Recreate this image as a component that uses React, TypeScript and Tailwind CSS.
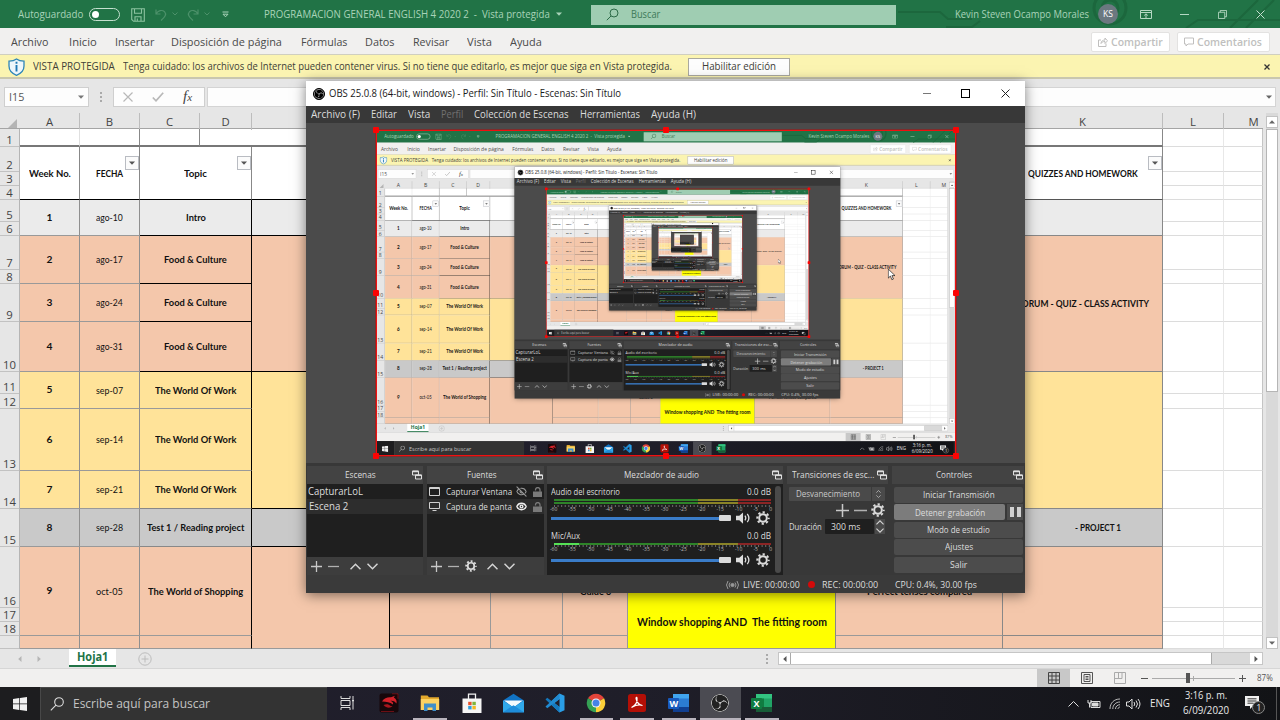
import React, { useLayoutEffect, useRef, useState } from 'react';
import { SiObsstudio } from 'react-icons/si';
import { Eye, EyeOff } from 'lucide-react';

type Kids = { children?: React.ReactNode };

/** One line of text, condensed or widened to fill the width set by its class. */
function T({ className = '', children }: { className?: string } & Kids) {
  const box = useRef<HTMLSpanElement>(null);
  const ink = useRef<HTMLSpanElement>(null);
  const [s, setS] = useState(1);
  useLayoutEffect(() => {
    if (box.current && ink.current && ink.current.offsetWidth > 0) {
      setS(box.current.offsetWidth / ink.current.offsetWidth);
    }
  }, []);
  return (
    <span ref={box} className={`block shrink-0 whitespace-pre leading-none ${className}`}>
      <span ref={ink} className="inline-block origin-left whitespace-pre" style={{ transform: `scaleX(${s})` }}>
        {children}
      </span>
    </span>
  );
}

function Caret({ className = '' }: { className?: string }) {
  return (
    <svg viewBox="0 0 6 4" className={`h-[4px] w-[6px] shrink-0 ${className}`} fill="currentColor">
      <path d="M0 .5h6L3 3.8z" />
    </svg>
  );
}

function ExcelTitle() {
  return (
    <div className="flex h-[28px] shrink-0 items-center bg-[#217346] text-[10.8px] text-[#a9d3b9]">
      <T className="ml-[18px] w-[65px]">Autoguardado</T>
      <div className="ml-[6px] flex h-[13px] w-[31px] shrink-0 items-center rounded-full border border-[#c5e0cf] pl-[2px]">
        <div className="h-[7px] w-[7px] rounded-full bg-white" />
      </div>
      <svg viewBox="0 0 14 14" className="ml-[11px] mt-[2px] h-[14px] w-[14px] shrink-0" fill="none" stroke="#8cc3a0" strokeWidth="1.1">
        <path d="M.7 .7h12.6v12.6H2.6L.7 11.4zM3.5 .7v4.6h7V.7M4 13.3V8.8h6v4.5M6.3 10.5v2.5" />
      </svg>
      <svg viewBox="0 0 12 12" className="ml-[10px] h-[13px] w-[12px] shrink-0" fill="none" stroke="#4c916a" strokeWidth="1.2">
        <path d="M1 1v4.5h4.5M1.2 5.2C3 2 7 1 9.500 3.200C12 6 10 8.500 6 12" />
      </svg>
      <svg viewBox="0 0 6 4" className="ml-[5px] h-[4px] w-[6px] shrink-0" fill="none" stroke="#4c916a"><path d="M.5.5 3 3 5.500.5" /></svg>
      <svg viewBox="0 0 12 12" className="ml-[9px] h-[13px] w-[12px] shrink-0 -scale-x-100" fill="none" stroke="#4c916a" strokeWidth="1.2">
        <path d="M1 1v4.5h4.5M1.2 5.2C3 2 7 1 9.500 3.200C12 6 10 8.500 6 12" />
      </svg>
      <svg viewBox="0 0 6 4" className="ml-[5px] h-[4px] w-[6px] shrink-0" fill="none" stroke="#4c916a"><path d="M.5.5 3 3 5.500.5" /></svg>
      <svg viewBox="0 0 7 7" className="ml-[12px] h-[7px] w-[7px] shrink-0" fill="none" stroke="#a9d3b9"><path d="M.5 1h6M1 3.200h5L3.500 5.800z" /></svg>
      <T className="ml-[35px] w-[286px]">PROGRAMACION GENERAL ENGLISH 4 2020 2  -  Vista protegida</T>
      <Caret className="ml-[6px]" />
      <div className="ml-[29px] mt-px flex h-[20px] w-[305px] shrink-0 items-center bg-[#9fcdb2] text-[#3d7a58]">
        <svg viewBox="0 0 13 13" className="ml-[15px] h-[13px] w-[13px]" fill="none" stroke="#2d6b48" strokeWidth="1">
          <circle cx="8" cy="5" r="4" /><path d="M5 8 .8 12.200" />
        </svg>
        <T className="ml-[12px] w-[29px] text-[10.500px]">Buscar</T>
      </div>
      <div className="relative flex h-full flex-1 items-center overflow-hidden">
        <svg viewBox="0 0 384 28" className="absolute inset-0 h-[28px] w-[384px]" fill="none" stroke="#1c673d" strokeWidth="3">
          <path d="M2 12h42l8 7h24M50 27h26l8-6M290 28l12-8h82M334 28 362 0M350 28l28-28" strokeWidth="2" />
          <circle cx="214" cy="8" r="16" /><circle cx="214" cy="8" r="8" />
        </svg>
        <T className="relative ml-[59px] w-[134px]">Kevin Steven Ocampo Morales</T>
        <div className="relative ml-[9px] flex h-[20px] w-[20px] shrink-0 items-center justify-center rounded-full bg-[#6b7880] text-[8.500px] text-white">KS</div>
        <svg viewBox="0 0 12 9" className="relative ml-[22px] h-[9px] w-[12px] shrink-0" fill="none" stroke="#b5d8c3"><path d="M.5.5h11v8H.5zM.5 2.500h11M6 8V4M4.200 5.500 6 3.800l1.800 1.700" /></svg>
        <div className="relative ml-[28px] h-px w-[9px] shrink-0 bg-[#b5d8c3]" />
        <svg viewBox="0 0 10 10" className="relative ml-[29px] h-[9px] w-[9px] shrink-0" fill="none" stroke="#b5d8c3"><path d="M.5 2.500h7v7h-7zM2.500 2.500v-2h7v7h-2" /></svg>
        <svg viewBox="0 0 9 9" className="relative ml-[29px] h-[9px] w-[9px] shrink-0" fill="none" stroke="#c5e0cf"><path d="M.5.5l8 8M8.500.5l-8 8" /></svg>
      </div>
    </div>
  );
}

function ExcelTabs() {
  return (
    <div className="flex h-[26px] shrink-0 items-center bg-[#f1f0ef] pt-px text-[11.600px] text-[#4a4a4a]">
      <T className="ml-[11px] w-[37px]">Archivo</T>
      <T className="ml-[21px] w-[28px]">Inicio</T>
      <T className="ml-[18px] w-[39px]">Insertar</T>
      <T className="ml-[17px] w-[111px]">Disposición de página</T>
      <T className="ml-[19px] w-[46px]">Fórmulas</T>
      <T className="ml-[18px] w-[30px]">Datos</T>
      <T className="ml-[18px] w-[36px]">Revisar</T>
      <T className="ml-[18px] w-[25px]">Vista</T>
      <T className="ml-[18px] w-[32px]">Ayuda</T>
      <div className="flex flex-1 justify-end gap-[7px] pr-[10px] text-[11.300px] text-[#c0bfbe]">
        <div className="flex h-[20px] w-[79px] items-center rounded-[2px] border border-[#e3e2e1] bg-white pl-[6px]">
          <svg viewBox="0 0 10 10" className="h-[10px] w-[10px]" fill="none" stroke="currentColor"><path d="M3 3H.5v6.500h7.500V6.500M3 6.500C3 4 5 3 7 3V1l2.500 2.800L7 6.500v-2C5 4.500 4 5 3 6.500z" /></svg>
          <T className="ml-[3px] w-[52px] font-semibold">Compartir</T>
        </div>
        <div className="flex h-[20px] w-[93px] items-center rounded-[2px] border border-[#e3e2e1] bg-white pl-[6px]">
          <svg viewBox="0 0 10 10" className="h-[10px] w-[10px]" fill="none" stroke="currentColor"><path d="M.5 1h9v6H4L2 9V7H.5z" /></svg>
          <T className="ml-[3px] w-[65px] font-semibold">Comentarios</T>
        </div>
      </div>
    </div>
  );
}

function ProtectedBar() {
  return (
    <div className="flex h-[25px] shrink-0 items-center border-b-2 border-t border-b-[#c9c7ae] border-t-[#d0cfc0] bg-[#fbf4b1] pt-px text-[10.900px] text-[#404038]">
      <svg viewBox="0 0 17 18" className="ml-[8px] h-[18px] w-[17px] shrink-0">
        <path d="M8.500 1C6 3 3.500 3.200 1 3.200V8c0 4.500 3 7.500 7.500 9.300C13 15.500 16 12.500 16 8V3.200c-2.500 0-5-.2-7.500-2.200z" fill="#eef6fb" stroke="#2f86b8" strokeWidth="1.300" />
        <path d="M8.500 7v6.500M8.500 3.800v2" stroke="#1f78b4" strokeWidth="1.900" />
      </svg>
      <T className="ml-[8px] w-[82px]">VISTA PROTEGIDA</T>
      <T className="ml-[8px] w-[549px]">Tenga cuidado: los archivos de Internet pueden contener virus. Si no tiene que editarlo, es mejor que siga en Vista protegida.</T>
      <div className="ml-[16px] flex h-[18px] w-[102px] shrink-0 items-center justify-center border border-[#aaa9a0] bg-[#fdfdfd]">
        <T className="w-[74px]">Habilitar edición</T>
      </div>
      <svg viewBox="0 0 6 6" className="ml-auto mr-[10px] h-[6px] w-[6px] shrink-0" stroke="#333" strokeWidth="1.300"><path d="M.5.5l5 5M5.500.5l-5 5" /></svg>
    </div>
  );
}

function FormulaBar() {
  return (
    <div className="flex h-[34px] shrink-0 items-center bg-[#e6e6e6] pt-px text-[11.500px] text-[#555]">
      <div className="ml-[4px] flex h-[20px] w-[85px] shrink-0 items-center border border-[#cfcfcf] bg-[#fdfdfd]">
        <T className="ml-[4px] w-[15px]">I15</T>
        <Caret className="ml-auto mr-[4px] text-[#777]" />
      </div>
      <div className="ml-[11px] flex w-[2px] shrink-0 flex-col gap-[2px]">
        <i className="h-[2px] bg-[#aaa]" /><i className="h-[2px] bg-[#aaa]" /><i className="h-[2px] bg-[#aaa]" />
      </div>
      <div className="ml-[11px] flex h-[20px] w-[92px] shrink-0 items-center border border-[#cfcfcf] bg-[#fdfdfd]">
        <svg viewBox="0 0 10 10" className="ml-[9px] h-[10px] w-[10px]" stroke="#b8b8b8" strokeWidth="1.200"><path d="M.5.5l9 9M9.500.5l-9 9" /></svg>
        <svg viewBox="0 0 12 10" className="ml-[19px] h-[10px] w-[12px]" fill="none" stroke="#b8b8b8" strokeWidth="1.700"><path d="M.8 5.500 4 8.800 11.200.8" /></svg>
        <span className="ml-[19px] font-['Liberation_Serif',serif] text-[15px] italic leading-none text-[#444]">f<span className="text-[11px]">x</span></span>
      </div>
      <div className="ml-[2px] flex h-[20px] w-[1069px] shrink-0 items-center justify-end border border-[#d4d4d4] bg-[#fdfdfd] pr-[3px] text-[#666]">
        <Caret />
      </div>
    </div>
  );
}

const COLS = 'grid-cols-[20px_60px_60px_60px_52px_138px_101px_72px_65px_208px_167px_160px_61px_39px]';

const ROWNUMS = [
  'h-[18px]', 'h-[25px]', 'h-[14px]', 'h-[14px]', 'h-[22px]', 'h-[14px]', 'h-[34px]', 'h-[14px]', 'h-[38px]',
  'h-[50px]', 'h-[22px]', 'h-[15px]', 'h-[62px]', 'h-[38px]', 'h-[38px]', 'h-[61px]', 'h-[14px]', 'h-[14px]', 'h-[13px]',
];

type Week = { n: string; date: string; topic: string; rows: string; fill: string; w: string; line: string };
const PEACH = 'bg-[#f4c7ab]';
const YELLOW = 'bg-[#ffe399]';
const WEEKS: Week[] = [
  { n: '1', date: 'ago-10', topic: 'Intro', rows: 'row-start-5 row-end-7', fill: 'bg-[#ebebeb]', w: 'w-[20px]', line: 'border-b-black' },
  { n: '2', date: 'ago-17', topic: 'Food & Culture', rows: 'row-start-7 row-end-9', fill: PEACH, w: 'w-[63px]', line: 'border-b-black' },
  { n: '3', date: 'ago-24', topic: 'Food & Culture', rows: 'row-start-9 row-end-10', fill: PEACH, w: 'w-[63px]', line: 'border-b-black' },
  { n: '4', date: 'ago-31', topic: 'Food & Culture', rows: 'row-start-10 row-end-11', fill: PEACH, w: 'w-[63px]', line: 'border-b-black' },
  { n: '5', date: 'sep-07', topic: 'The World Of Work', rows: 'row-start-11 row-end-13', fill: YELLOW, w: 'w-[81px]', line: 'border-b-[#9a9a9a]' },
  { n: '6', date: 'sep-14', topic: 'The World Of Work', rows: 'row-start-13 row-end-14', fill: YELLOW, w: 'w-[81px]', line: 'border-b-[#9a9a9a]' },
  { n: '7', date: 'sep-21', topic: 'The World Of Work', rows: 'row-start-14 row-end-15', fill: YELLOW, w: 'w-[81px]', line: 'border-b-[#888]' },
  { n: '8', date: 'sep-28', topic: 'Test 1 / Reading project', rows: 'row-start-15 row-end-16', fill: 'bg-[#c9c9c9]', w: 'w-[97px]', line: 'border-b-[#888]' },
  { n: '9', date: 'oct-05', topic: 'The World of Shopping', rows: 'row-start-16 row-end-19', fill: PEACH, w: 'w-[95px]', line: 'border-b-[#9a9a9a]' },
  { n: '', date: '', topic: '', rows: 'row-start-19 row-end-20', fill: PEACH, w: 'w-[10px]', line: 'border-b-[#9a9a9a]' },
];

const BLOCKS: [string, string, string][] = [
  ['row-start-5 row-end-7', 'bg-[#ebebeb]', 'border-b-black'],
  ['row-start-7 row-end-11', PEACH, 'border-b-black'],
  ['row-start-11 row-end-15', YELLOW, 'border-b-black'],
  ['row-start-15 row-end-16', 'bg-[#c9c9c9]', 'border-b-black'],
  ['row-start-16 row-end-20', PEACH, 'border-b-[#9a9a9a]'],
];

const LOWER = [
  { col: 'col-start-7', label: '', w: 'w-[10px]', line: 'border-r-[#999]' },
  { col: 'col-start-8', label: '', w: 'w-[10px]', line: 'border-r-[#999]' },
  { col: 'col-start-9', label: 'Guide 3', w: 'w-[31px]', line: 'border-r-[#999]' },
  { col: 'col-start-11', label: 'Perfect tenses compared', w: 'w-[105px]', line: 'border-r-[#888]' },
];

const GRIDROWS = [
  'row-start-1', 'row-start-2', 'row-start-3', 'row-start-4', 'row-start-5', 'row-start-6', 'row-start-7', 'row-start-8', 'row-start-9', 'row-start-10',
  'row-start-11', 'row-start-12', 'row-start-13', 'row-start-14', 'row-start-15', 'row-start-16', 'row-start-17', 'row-start-18', 'row-start-19',
];

function Cell({ className = '', children }: { className?: string } & Kids) {
  return <div className={`flex items-center justify-center border-b border-r ${className}`}>{children}</div>;
}

function FilterButton() {
  return (
    <div className="absolute right-0 top-[9px] flex h-[14px] w-[14px] items-center justify-center border border-[#b9bcc2] bg-[#fbfbfb] text-[#555]">
      <Caret />
    </div>
  );
}

function Sheet() {
  const heads = ['A', 'B', 'C', 'D', '', '', '', '', '', '', 'K', 'L'];
  return (
    <div className="flex h-[536px] shrink-0 bg-[#e6e6e6]">
      <div className="w-[1263px] shrink-0">
        <div className={`grid h-[16px] ${COLS} border-b border-[#a5a5a5] text-[11.300px] leading-[17px] text-[#444]`}>
          <div className="flex items-end justify-end pb-[2px] pr-[3px]">
            <svg viewBox="0 0 9 9" className="h-[9px] w-[9px]" fill="#b4b4b4"><path d="M9 0v9H0z" /></svg>
          </div>
          {heads.map((h, i) => (
            <div key={i} className="border-r border-[#bdbdbd] text-center">{h}</div>
          ))}
          <div className="pl-[20px] text-center">M</div>
        </div>
        <div
          className={`grid h-[520px] ${COLS} grid-rows-[18px_25px_14px_14px_22px_14px_34px_14px_38px_50px_22px_15px_62px_38px_38px_61px_14px_14px_13px] bg-white font-['Lato','Carlito',sans-serif] text-[10.200px] text-[#111]`}
        >
          <div className="col-start-1 row-start-1 row-end-20 border-r border-[#b5b5b5] bg-[#e6e6e6] font-['Open_Sans','Noto_Sans',sans-serif] text-[11.300px] text-[#444]">
            {ROWNUMS.map((h, i) => (
              <div key={i} className={`flex items-end justify-center border-b border-[#c2c2c2] leading-[13px] ${h}`}>{i < 18 ? i + 1 : ''}</div>
            ))}
          </div>

          <Cell className="col-start-2 row-start-1 border-b-2 border-b-[#777] border-r-[#e0e0e0]" />
          <Cell className="col-start-3 row-start-1 border-b-2 border-b-[#777] border-r-[#888]" />
          <Cell className="col-start-4 row-start-1 border-b-2 border-b-[#777] border-r-[#888]" />
          <Cell className="col-start-5 col-end-13 row-start-1 border-b-2 border-b-[#777] border-r-[#888]" />

          <Cell className="col-start-2 row-start-2 row-end-5 border-b-black border-r-[#888] font-bold">
            <T className="w-[42px]">Week No.</T>
          </Cell>
          <Cell className="relative col-start-3 row-start-2 row-end-5 border-b-black border-r-[#888] font-bold">
            <T className="w-[27px]">FECHA</T>
            <FilterButton />
          </Cell>
          <Cell className="relative col-start-4 col-end-6 row-start-2 row-end-5 border-b-black border-r-[#888] font-bold">
            <T className="w-[23px]">Topic</T>
            <FilterButton />
          </Cell>
          <Cell className="col-start-6 col-end-12 row-start-2 row-end-5 border-b-black border-r-[#888]" />
          <Cell className="relative col-start-12 row-start-2 row-end-5 border-b-[#555] border-r-[#888] font-bold">
            <T className="w-[110px]">QUIZZES AND HOMEWORK</T>
            <FilterButton />
          </Cell>

          {WEEKS.map((k) => (
            <React.Fragment key={k.rows}>
              <Cell className={`col-start-2 ${k.rows} ${k.fill} border-b-[#999] border-r-[#8f8f8f] font-bold`}>{k.n}</Cell>
              <Cell className={`col-start-3 ${k.rows} ${k.fill} border-b-[#999] border-r-[#8f8f8f]`}>
                {k.date && <T className="w-[27px]">{k.date}</T>}
              </Cell>
              <Cell className={`col-start-4 col-end-6 ${k.rows} ${k.fill} ${k.line} border-r-black font-bold`}>
                {k.topic && <T className={k.w}>{k.topic}</T>}
              </Cell>
            </React.Fragment>
          ))}

          {BLOCKS.map(([rows, fill, line]) => (
            <Cell key={rows} className={`col-start-6 ${rows} ${fill} ${line} border-r-black`} />
          ))}

          {LOWER.map((c) => (
            <React.Fragment key={c.col}>
              <Cell className={`${c.col} row-start-16 row-end-19 ${PEACH} border-b-[#999] ${c.line} font-bold`}>
                {c.label && <T className={c.w}>{c.label}</T>}
              </Cell>
              <Cell className={`${c.col} row-start-19 ${PEACH} border-b-[#999] ${c.line}`} />
            </React.Fragment>
          ))}
          <Cell className="col-start-10 row-start-16 row-end-20 border-b-[#999] border-r-[#888] bg-[#ffff00] pt-[49px] text-[11.200px] font-bold">
            <T className="w-[190px]">Window shopping AND  The fitting room</T>
          </Cell>

          <Cell className="col-start-12 row-start-5 row-end-7 border-b-[#888] border-r-[#888] bg-[#ebebeb]" />
          <Cell className={`col-start-12 row-start-7 row-end-11 border-b-[#888] border-r-[#888] ${PEACH} font-bold`}>
            <T className="w-[132px]">FORUM - QUIZ - CLASS ACTIVITY</T>
          </Cell>
          <Cell className={`col-start-12 row-start-11 row-end-15 border-b-[#888] border-r-[#888] ${YELLOW}`} />
          <Cell className="col-start-12 row-start-15 border-b-[#888] border-r-[#888] bg-[#c9c9c9] pl-[30px] font-bold">
            <T className="w-[46px]">- PROJECT 1</T>
          </Cell>
          <Cell className={`col-start-12 row-start-16 row-end-19 border-b-[#888] border-r-[#888] ${PEACH}`} />
          <Cell className={`col-start-12 row-start-19 border-b-[#999] border-r-[#888] ${PEACH}`} />

          {GRIDROWS.map((r) => (
            <React.Fragment key={r}>
              <div className={`col-start-13 ${r} border-b border-r border-b-[#dcdcdc] border-r-[#e8e8e8]`} />
              <div className={`col-start-14 ${r} border-b border-r border-b-[#dcdcdc] border-r-[#c4c4c4]`} />
            </React.Fragment>
          ))}
        </div>
      </div>
      <div className="ml-[3px] flex w-[12px] flex-col bg-[#d9d9d9] pt-[3px] text-[#666]">
        <div className="flex h-[12px] items-center justify-center border border-[#c2c2c2] bg-white"><Caret className="rotate-180" /></div>
        <div className="mt-px h-[263px] border border-[#b5b5b5] bg-white" />
        <div className="mt-auto flex h-[12px] items-center justify-center border border-[#c2c2c2] bg-white"><Caret /></div>
      </div>
    </div>
  );
}

function SheetTabs() {
  return (
    <div className="flex h-[20px] shrink-0 items-center border-b border-[#d6d6d6] bg-[#e6e6e6]">
      <Caret className="ml-[17px] rotate-90 text-[#b5b5b5]" />
      <Caret className="ml-[13px] -rotate-90 text-[#b5b5b5]" />
      <div className="ml-[27px] flex h-[18px] w-[47px] shrink-0 items-center justify-center self-start border-b-2 border-[#217346] bg-white text-[12px] font-bold text-[#217346]">
        <T className="w-[31px]">Hoja1</T>
      </div>
      <svg viewBox="0 0 14 14" className="ml-[22px] h-[14px] w-[14px] shrink-0" fill="none" stroke="#bcbcbc"><circle cx="7" cy="7" r="6.200" /><path d="M7 3.500v7M3.500 7h7" /></svg>
      <div className="ml-[614px] flex w-[2px] shrink-0 flex-col gap-[2px]">
        <i className="h-[2px] bg-[#aaa]" /><i className="h-[2px] bg-[#aaa]" /><i className="h-[2px] bg-[#aaa]" />
      </div>
      <div className="ml-[10px] flex h-[13px] w-[485px] shrink-0 border border-[#c6c6c6] bg-[#d9d9d9] text-[#555]">
        <div className="flex w-[12px] items-center justify-center border-r border-[#aaa] bg-white"><Caret className="rotate-90" /></div>
        <div className="w-[421px] border-r border-[#aaa] bg-white" />
        <div className="ml-auto flex w-[12px] items-center justify-center bg-white"><Caret className="-rotate-90" /></div>
      </div>
    </div>
  );
}

function ExcelStatus() {
  return (
    <div className="flex h-[18px] shrink-0 items-center bg-[#f1f0ef] text-[#555]">
      <div className="ml-[1037px] flex h-full w-[33px] shrink-0 items-center justify-center bg-[#c8c8c8]">
        <svg viewBox="0 0 12 12" className="h-[12px] w-[12px]" fill="none" stroke="#444"><path d="M.5.5h11v11H.5zM4 .5v11M8 .5v11M.5 4h11M.5 8h11" /></svg>
      </div>
      <svg viewBox="0 0 12 12" className="ml-[11px] h-[12px] w-[12px] shrink-0" fill="none" stroke="#555"><path d="M.5.5h11v11H.5zM3 2.500h6v7H3zM4.500 4.500h3M4.500 6h3M4.500 7.500h3" /></svg>
      <svg viewBox="0 0 12 12" className="ml-[21px] h-[12px] w-[12px] shrink-0" fill="none" stroke="#aaa"><path d="M.5.5h11v11H.5zM4.500.5v6M8 .5v6M.5 6.500H8" /></svg>
      <div className="ml-[15px] h-px w-[7px] shrink-0 bg-[#555]" />
      <div className="ml-[4px] flex w-[83px] shrink-0 items-center">
        <i className="h-px w-[34px] bg-[#aaa]" /><i className="h-[10px] w-[4px] bg-[#555]" /><i className="h-px w-[3px] bg-[#aaa]" /><i className="h-[5px] w-px bg-[#aaa]" /><i className="h-px flex-1 bg-[#aaa]" />
      </div>
      <svg viewBox="0 0 7 7" className="ml-[4px] h-[7px] w-[7px] shrink-0" stroke="#555"><path d="M0 3.500h7M3.500 0v7" /></svg>
      <T className="ml-[11px] w-[16px] text-[9.500px]">87%</T>
    </div>
  );
}

const ICON = 'h-[20px] w-[20px]';

function Dragon() {
  return (
    <svg viewBox="0 0 20 20" className={ICON}>
      <rect x=".5" y=".5" width="19" height="19" rx="2" fill="#17070a" />
      <path d="M3 8.500C5 5 9 3.800 12 4.300l4-1.600-1.200 1.800C17.500 6 18 8 17.500 10.500c-2-2.500-4-3-6-2.700 2 1 3 2 2.500 3.700-3-2.500-6.500-2.500-11-3z" fill="#d3222a" />
      <path d="M4.500 12c3-1.200 5.500-.8 6.500.8l2.500.4c-2 2-6 2.300-9-1.200z" fill="#a8161d" />
      <path d="M13 .8h6v5M2 18.500h13" stroke="#8f1319" strokeWidth=".7" fill="none" />
    </svg>
  );
}
function Explorer() {
  return (
    <svg viewBox="0 0 20 20" className={ICON}>
      <path d="M.8 2.500h6.700L9 4.300h10V17H.8z" fill="#e3a92c" />
      <path d="M.8 6h18.400v11H.8z" fill="#fbd262" />
      <path d="M4 10.500h12V18h-3.500v-3.500h-5V18H4z" fill="#3f8fc9" />
    </svg>
  );
}
function Store() {
  return (
    <svg viewBox="0 0 20 20" className={ICON}>
      <path d="M6.500 6V1.200h7V6" fill="none" stroke="#f2f2f2" strokeWidth="1.300" />
      <path d="M.5 5.500h19V20H.5z" fill="#f5f5f5" />
      <path d="M6.200 8.800h3.400v3.400H6.200z" fill="#e8502a" /><path d="M10.400 8.800h3.400v3.400h-3.400z" fill="#7fb53a" />
      <path d="M6.200 13h3.400v3.400H6.200z" fill="#2d9fdd" /><path d="M10.400 13h3.400v3.400h-3.400z" fill="#f5b921" />
    </svg>
  );
}
function Mail() {
  return (
    <svg viewBox="0 0 21 20" className="h-[20px] w-[21px]">
      <path d="M0 7.500 10.500.8 21 7.500v11.700H0z" fill="#1173c4" />
      <path d="M1 7.500h19l-9.500 7z" fill="#f3fafd" />
      <path d="M0 7.500l10.500 7L21 7.500v11.700H0z" fill="#31a9ea" />
      <path d="M0 19.200l10.500-7 10.500 7z" fill="#1e8ddb" />
    </svg>
  );
}
function Code() {
  return (
    <svg viewBox="0 0 20 20" className={ICON}>
      <path d="M14.500.5 4.500 10l10 9.500 5-2.300V2.800z" fill="#2a9ee6" />
      <path d="M14.500 6v8L9.500 10z" fill="#211f2d" />
      <path d="M14.500 14 2.200 4.800.5 6.500l14 13z" fill="#1478bd" />
      <path d="M14.500.5.5 13.500l1.700 1.700L14.500 6z" fill="#218ad1" />
    </svg>
  );
}
function Chrome() {
  return (
    <svg viewBox="0 0 20 20" className={ICON}>
      <path d="M10 10 1.950 5.350A9.300 9.300 0 0 1 18.050 5.350z" fill="#e2443a" />
      <path d="M10 10 18.050 5.350A9.300 9.300 0 0 1 10 19.300z" fill="#fbcf38" />
      <path d="M10 10v9.300A9.300 9.300 0 0 1 1.950 5.350z" fill="#35a154" />
      <circle cx="10" cy="10" r="4.500" fill="#f5f5f5" /><circle cx="10" cy="10" r="3.500" fill="#4783e8" />
    </svg>
  );
}
function Acrobat() {
  return (
    <svg viewBox="0 0 20 20" className={ICON}>
      <rect x="1" y="1" width="18" height="18" rx="2.500" fill="#b40f06" />
      <path d="M4.500 14.500c4-2 6-6 5.500-9.500-.3-1.500-1.300-.5-.8 1 .8 3.500 3 6 6.300 6.500-3-1.200-7.500 0-11 2z" fill="none" stroke="#fff" strokeWidth="1.200" />
    </svg>
  );
}
function Office({ kind }: { kind: 'W' | 'X' }) {
  const w = kind === 'W';
  return (
    <span className="relative block h-[20px] w-[21px]">
      <svg viewBox="0 0 21 20" className="h-[20px] w-[21px]">
        <rect x="5" y="1" width="16" height="18" rx="1.500" fill={w ? '#2b7cd3' : '#21a366'} />
        <path d="M5 1h16v4.500H5z" fill={w ? '#41a5ee' : '#33c481'} />
        <path d="M5 14h16v5H5z" fill={w ? '#103f91' : '#185c37'} />
        {!w && <path d="M5 5.500h8V14H5z" fill="#107c41" />}
        <rect x="0" y="5" width="11" height="11" rx="1" fill={w ? '#185abd' : '#107c41'} />
      </svg>
      <span className="absolute left-0 top-[5px] w-[11px] text-center text-[9px] font-bold leading-[11px] text-white">{kind}</span>
    </span>
  );
}

function Taskbar() {
  const apps: [React.ReactNode, string][] = [
    [
      <svg viewBox="0 0 15 14" className="h-[14px] w-[15px]" fill="none" stroke="#ddd"><path d="M1 0v2.500h9V0M1 14v-2.500h9V14M1 4.500h9v5H1zM13 0v3M13 5.500v8" /><path d="M13 3.500v2" strokeWidth="2" /></svg>,
      '',
    ],
    [<Dragon />, ''],
    [<Explorer />, 'w-[34px]'],
    [<Store />, ''],
    [<Mail />, ''],
    [<Code />, ''],
    [<Chrome />, 'w-[33px]'],
    [<Acrobat />, 'w-[34px]'],
    [<Office kind="W" />, 'w-[34px]'],
    [<SiObsstudio className="h-[18px] w-[18px] rounded-full bg-[#222] text-[#ddd]" />, 'w-full'],
    [<Office kind="X" />, 'w-[34px]'],
  ];
  return (
    <div className="flex h-[33px] shrink-0 items-center bg-linear-to-r from-[#211f2d] via-[#1f1e29] to-[#121316] text-[#e8e8e8]">
      <div className="flex h-full w-[40px] shrink-0 items-center justify-center bg-[#1d1d1f]">
        <svg viewBox="0 0 14 14" className="h-[14px] w-[14px]" fill="#f0f0f0"><path d="M0 2l6.300-.9v5.500H0zM7 1l7-1v6.600H7zM0 7.300h6.300v5.600L0 12zM7 7.300h7V14l-7-1z" /></svg>
      </div>
      <div className="flex h-full w-[287px] shrink-0 items-center border-l border-t border-[#484848] bg-[#333]">
        <svg viewBox="0 0 14 14" className="ml-[9px] h-[14px] w-[14px]" fill="none" stroke="#ddd" strokeWidth="1.100"><circle cx="9" cy="5" r="4.300" /><path d="M6 8.200.8 13.300" /></svg>
        <T className="ml-[9px] w-[137px] text-[12.600px] text-[#c4c4c4]">Escribe aquí para buscar</T>
      </div>
      {apps.map(([icon, line], i) => (
        <div key={i} className={`flex h-full w-[41.400px] shrink-0 flex-col items-center ${line === 'w-full' ? 'bg-[#4b4b52]' : ''}`}>
          <div className="flex h-[31px] items-center justify-center">{icon}</div>
          <div className={`h-[2px] ${line ? `bg-[#b9b4bd] ${line}` : 'w-0'}`} />
        </div>
      ))}
      <svg viewBox="0 0 11 6" className="ml-[286px] h-[6px] w-[11px] shrink-0" fill="none" stroke="#ddd"><path d="M.5 5.500l5-5 5 5" /></svg>
      <svg viewBox="0 0 14 10" className="ml-[8px] h-[10px] w-[14px] shrink-0" fill="none" stroke="#ddd"><path d="M4 2.500h9v6H4zM1 1v3h3V1M2.500 4v4.500" /><path d="M5.500 4h5.500v3H5.500z" fill="#ddd" /></svg>
      <svg viewBox="0 0 12 12" className="ml-[8px] h-[12px] w-[12px] shrink-0" fill="none" stroke="#bbb"><path d="M1 11C1 5 5 1 11 1M3.800 11c0-4 3-7 7.200-7M6.500 11c0-2.500 2-4.300 4.500-4.300M9 11c0-1 .8-2 2-2" /></svg>
      <svg viewBox="0 0 15 12" className="ml-[5px] h-[12px] w-[15px] shrink-0" fill="none" stroke="#ddd"><path d="M.5 4h2.500l3-3v10l-3-3H.5zM8 4q1.500 2 0 4M10 2.500q3 3.500 0 7M12 1q4 5 0 10" /></svg>
      <T className="ml-[9px] w-[20px] text-[10.800px]">ENG</T>
      <div className="ml-[12px] mt-[-2px] flex w-[48px] shrink-0 flex-col items-center gap-[4px] text-[10.800px]">
        <T className="w-[42px]">3:16 p. m.</T>
        <T className="w-[46px]">6/09/2020</T>
      </div>
      <div className="relative ml-[16px] h-[18px] w-[24px] shrink-0">
        <svg viewBox="0 0 14 14" className="ml-[-1px] mt-[1px] h-[14px] w-[14px]"><path d="M0 0h14v10H8l-3 3v-3H0z" fill="#f0f0f0" /><path d="M2.500 2.800h9M2.500 5h9M2.500 7.200h6" stroke="#333" /></svg>
        <span className="absolute left-[6px] top-[6px] flex h-[13px] w-[13px] items-center justify-center rounded-full border border-[#888] bg-[#222] text-[9px] leading-none">1</span>
      </div>
      <div className="ml-auto mr-[3px] h-full w-px bg-[#555]" />
    </div>
  );
}

/* ---------- OBS Studio ---------- */

function DockIcon() {
  return (
    <svg viewBox="0 0 10 10" className="absolute right-[1px] top-[4px] h-[10px] w-[10px]" fill="none" stroke="#ddd">
      <path d="M.5 1h6v4h-6z" /><path d="M.5 1.500h6" strokeWidth="1.500" /><path d="M3.500 5h6v4h-6z" fill="#444" /><path d="M3.500 5.300h6" strokeWidth="1.500" />
    </svg>
  );
}

function Dock({ title, tw, className, children }: { title: string; tw: string; className: string } & Kids) {
  return (
    <div className={`flex h-[110px] shrink-0 flex-col ${className}`}>
      <div className="relative flex h-[18px] shrink-0 items-center justify-center bg-[#434343] text-[9.600px]">
        <T className={tw}>{title}</T>
        <DockIcon />
      </div>
      {children}
    </div>
  );
}

const Plus = ({ className = '' }) => <svg viewBox="0 0 11 11" className={`h-[11px] w-[11px] shrink-0 ${className}`} stroke="#c8c8c8" strokeWidth="1.300"><path d="M5.500 0v11M0 5.500h11" /></svg>;
const Minus = ({ className = '' }) => <svg viewBox="0 0 11 11" className={`h-[11px] w-[11px] shrink-0 ${className}`} stroke="#b0b0b0" strokeWidth="1.300"><path d="M0 5.500h11" /></svg>;
const Up = ({ className = '' }) => <svg viewBox="0 0 11 7" className={`h-[7px] w-[11px] shrink-0 ${className}`} fill="none" stroke="#d5d5d5" strokeWidth="1.500"><path d="M.5 6.200l5-5 5 5" /></svg>;
const Down = ({ className = '' }) => <svg viewBox="0 0 11 7" className={`h-[7px] w-[11px] shrink-0 ${className}`} fill="none" stroke="#d5d5d5" strokeWidth="1.500"><path d="M.5.8l5 5 5-5" /></svg>;

function Gear({ className = '' }: { className?: string }) {
  return (
    <svg viewBox="0 0 14 14" className={`shrink-0 ${className}`} fill="none" stroke="#dcdcdc">
      <circle cx="7" cy="7" r="3.800" strokeWidth="2" />
      <circle cx="7" cy="7" r="5.700" strokeWidth="2" strokeDasharray="2.240 2.240" strokeDashoffset="1.120" />
    </svg>
  );
}

function SourceRow({ label, on, className, screen }: { label: string; on: boolean; className: string; screen: boolean }) {
  return (
    <div className={`flex h-[15px] shrink-0 items-center ${className}`}>
      <svg viewBox="0 0 11 9" className="ml-[2px] h-[9px] w-[11px] shrink-0" fill="none" stroke="#d0d0d0">
        {screen ? <path d="M.5.5h10v6H.5zM3.500 8.500h4" /> : <path d="M.5.5h10v8H.5zM.5 1.500h10" />}
      </svg>
      <T className="ml-[6px] w-[66px] text-[9.600px]">{label}</T>
      {on ? <Eye className="ml-[4px] h-[11px] w-[11px] shrink-0 text-[#eee]" strokeWidth={3} /> : <EyeOff className="ml-[4px] h-[11px] w-[11px] shrink-0 text-[#999]" strokeWidth={2.400} />}
      <svg viewBox="0 0 9 10" className="ml-[6px] h-[10px] w-[9px] shrink-0" fill="#7a7a7a"><path d="M0 4.500h9V10H0z" /><path d="M2.500 3.500V2.800a2.200 2.200 0 0 1 4.500 0v2" fill="none" stroke="#7a7a7a" strokeWidth="1.300" /></svg>
    </div>
  );
}

function Channel({ name, nw, double }: { name: string; nw: string; double: boolean }) {
  const marks = ['-60', '-55', '-50', '-45', '-40', '-35', '-30', '-25', '-20', '-15', '-10', '-5', '0'];
  return (
    <div className="flex shrink-0 flex-col">
      <div className="flex h-[14px] items-center justify-between pl-[4px] pr-[4px] text-[9.600px]">
        <T className={nw}>{name}</T>
        <T className="w-[24px]">0.0 dB</T>
      </div>
      {(double ? [0, 1] : [0]).map((r) => (
        <div key={r} className={`ml-[7px] flex w-[217px] ${double ? 'mb-px h-[2px]' : 'h-[2px]'}`}>
          {!double && <i className="h-full w-[25px] bg-[#55e055]" />}
          <i className={`h-full bg-[#2e8429] ${double ? 'w-[144px]' : 'w-[119px]'}`} /><i className="h-full w-[40px] bg-[#8a8327]" /><i className="h-full flex-1 bg-[#8b2525]" />
        </div>
      ))}
      <svg viewBox="0 0 217 2" className="ml-[7px] h-[2px] w-[217px]" stroke="#bbb" strokeWidth="1">
        <path d="M0 1h217" strokeDasharray="1 2.580" />
      </svg>
      <div className="ml-[3px] flex h-[5px] w-[222px] justify-between text-[5px] leading-[5px] text-[#bbb]">
        {marks.map((m) => <span key={m}>{m}</span>)}
      </div>
      <div className={`flex h-[14px] items-center pl-[4px] ${double ? 'mt-[-1px]' : 'mt-[1px]'}`}>
        <i className="h-[3px] w-[168px] bg-[#3a7cc8]" />
        <i className="h-[6px] w-[12px] rounded-[1px] bg-[#dadada]" />
        <svg viewBox="0 0 16 14" className="ml-[5px] h-[14px] w-[15px] shrink-0" fill="none" stroke="#ddd" strokeWidth="1.400">
          <path d="M0 4.500h3.500L7.500 1v12L3.500 9.500H0z" fill="#ddd" stroke="none" /><path d="M9.500 4.500q1.800 2.500 0 5M12 2.500q3.500 4.500 0 9" />
        </svg>
        <Gear className="ml-[5px] h-[14px] w-[14px]" />
      </div>
    </div>
  );
}

function ObsButton({ children, w, className = '' }: { w: string; className?: string } & Kids) {
  return (
    <div className={`flex h-[16px] items-center justify-center rounded-[2px] bg-[#4c4c4c] ${className}`}>
      <T className={w}>{children}</T>
    </div>
  );
}

const HANDLES = [
  'left-[-3px] top-[-3px]', 'left-[287px] top-[-3px]', 'right-[-3px] top-[-3px]',
  'left-[-3px] top-[160px]', 'right-[-3px] top-[160px]',
  'left-[-3px] bottom-[-3px]', 'left-[287px] bottom-[-3px]', 'right-[-3px] bottom-[-3px]',
];

function ObsWindow({ depth }: { depth: number }) {
  return (
    <div className="absolute left-[306px] top-[81px] flex h-[512px] w-[719px] flex-col bg-[#3a3a3a] text-[#dcdcdc] shadow-[0_2px_12px_rgba(0,0,0,0.5)]">
      <div className="flex h-[25px] shrink-0 items-center bg-white text-[10.800px] text-[#1a1a1a]">
        <SiObsstudio className="ml-[7px] h-[12px] w-[12px] shrink-0 rounded-full border border-black bg-black text-white" />
        <T className="ml-[4px] w-[292px]">OBS 25.0.8 (64-bit, windows) - Perfil: Sin Título - Escenas: Sin Título</T>
        <i className="ml-[302px] h-px w-[8px] bg-[#777]" />
        <i className="ml-[30px] h-[9px] w-[9px] border border-black" />
        <svg viewBox="0 0 9 9" className="ml-[31px] h-[9px] w-[9px]" stroke="#222"><path d="M.5.5l8 8M8.500.5l-8 8" /></svg>
      </div>
      <div className="flex h-[17px] shrink-0 items-center bg-[#383838] text-[10.900px]">
        <T className="ml-[5px] w-[49px]">Archivo (F)</T>
        <T className="ml-[11px] w-[26px]">Editar</T>
        <T className="ml-[11px] w-[22px]">Vista</T>
        <T className="ml-[11px] w-[22px] text-[#707070]">Perfil</T>
        <T className="ml-[11px] w-[95px]">Colección de Escenas</T>
        <T className="ml-[11px] w-[60px]">Herramientas</T>
        <T className="ml-[11px] w-[45px]">Ayuda (H)</T>
      </div>
      <div className="h-[340px] shrink-0 bg-[#4b4b4b] pl-[70px] pt-[7px]">
        <div className="relative h-[326px] w-[580px]">
          <div className="h-[326px] w-[580px] overflow-hidden bg-[#4b4b4b]">
            {depth < 5 && (
              <div className="h-[720px] w-[1280px] origin-top-left scale-[0.4529]">
                <Desktop depth={depth + 1} />
              </div>
            )}
          </div>
          <div className="absolute inset-0 border border-[#f01010] outline outline-[#a01818]/60" />
          {HANDLES.map((h) => <i key={h} className={`absolute h-[6px] w-[6px] rounded-[1px] bg-[#fb0404] ${h}`} />)}
        </div>
      </div>
      <div className="flex h-[112px] shrink-0 bg-[#383838] pt-[3px]">
        <Dock title="Escenas" tw="-ml-[10px] w-[31px]" className="ml-px w-[116px]">
          <div className="flex h-[73px] flex-col bg-[#1f1f1f] text-[10.900px]">
            <div className="flex h-[15px] items-center pl-[1px]"><T className="w-[55px]">CapturarLoL</T></div>
            <div className="flex h-[15px] items-center bg-[#2d2d2d] pl-[2px]"><T className="w-[39px]">Escena 2</T></div>
          </div>
          <div className="flex h-[18px] items-center bg-[#3d3d3d]">
            <Plus className="ml-[4px]" /><Minus className="ml-[6px]" /><Up className="ml-[11px]" /><Down className="ml-[6px]" />
          </div>
        </Dock>
        <Dock title="Fuentes" tw="-ml-[8px] w-[30px]" className="ml-[4px] w-[117px]">
          <div className="flex h-[73px] flex-col bg-[#1f1f1f]">
            <SourceRow label="Capturar Ventana" on={false} screen={false} className="" />
            <SourceRow label="Captura de panta" on screen className="bg-[#2d2d2d]" />
          </div>
          <div className="flex h-[18px] items-center bg-[#3d3d3d]">
            <Plus className="ml-[4px]" /><Minus className="ml-[6px]" /><Gear className="ml-[6px] h-[12px] w-[12px]" /><Up className="ml-[10px]" /><Down className="ml-[6px]" />
          </div>
        </Dock>
        <Dock title="Mezclador de audio" tw="-ml-[8px] w-[75px]" className="ml-[3px] w-[236px]">
          <div className="flex h-[91px] bg-[#1f1f1f]">
            <div className="flex w-[228px] flex-col gap-[4px] pt-[1px]">
              <Channel name="Audio del escritorio" nw="w-[69px]" double />
              <Channel name="Mic/Aux" nw="w-[29px]" double={false} />
            </div>
            <div className="my-[2px] w-[6px] rounded-full bg-[#4a4a4a]" />
          </div>
        </Dock>
        <Dock title="Transiciones de esc..." tw="-ml-[9px] w-[82px]" className="ml-[4px] w-[101px]">
          <div className="flex flex-1 flex-col pl-[2px] pt-[3px]">
            <div className="flex h-[14px] w-[96px] items-center rounded-[1px] bg-[#4a4a4a] text-[9.600px] text-[#c8c8c8]">
              <T className="ml-[7px] w-[64px]">Desvanecimiento</T>
              <div className="ml-[11px] flex h-full w-[13px] flex-col items-center justify-center gap-[2px] border-l border-[#3a3a3a]">
                <Up className="h-[3px]! w-[5px]!" /><Down className="h-[3px]! w-[5px]!" />
              </div>
            </div>
            <div className="mt-[2px] flex h-[14px] items-center">
              <Plus className="ml-[47px] h-[13px]! w-[13px]!" /><Minus className="ml-[5px] h-[13px]! w-[13px]!" /><Gear className="ml-[4px] h-[14px] w-[14px]" />
            </div>
            <div className="mt-[2px] flex h-[15px] items-center text-[9.600px]">
              <T className="ml-0 w-[33px]">Duración</T>
              <div className="ml-[3px] flex h-full w-[49px] items-center rounded-[1px] bg-[#1f1f1f] pl-[6px]"><T className="w-[29px]">300 ms</T></div>
              <div className="ml-px flex h-full w-[10px] flex-col items-center justify-between bg-[#4a4a4a] py-[1px]"><Up className="h-[5px]! w-[8px]!" /><Down className="h-[5px]! w-[8px]!" /></div>
            </div>
          </div>
        </Dock>
        <Dock title="Controles" tw="-ml-[8px] w-[36px]" className="ml-[4px] w-[132px]">
          <div className="flex flex-col gap-[1.400px] pl-[2px] pr-[1px] pt-[3px] text-[9.600px]">
            <ObsButton w="w-[72px]">Iniciar Transmisión</ObsButton>
            <div className="flex gap-[2px]">
              <ObsButton w="w-[70px]" className="w-[111px] bg-[#7c7c7c]!">Detener grabación</ObsButton>
              <div className="flex h-[16px] w-[16px] items-center justify-center gap-[3px] bg-[#4c4c4c]"><i className="h-[10px] w-[4px] bg-[#d0d0d0]" /><i className="h-[10px] w-[4px] bg-[#d0d0d0]" /></div>
            </div>
            <ObsButton w="w-[63px]">Modo de estudio</ObsButton>
            <ObsButton w="w-[28px]">Ajustes</ObsButton>
            <ObsButton w="w-[17px]">Salir</ObsButton>
          </div>
        </Dock>
      </div>
      <div className="flex h-[18px] shrink-0 items-center pt-px text-[9.600px]">
        <svg viewBox="0 0 13 10" className="ml-[420px] h-[10px] w-[13px]" fill="none" stroke="#999"><circle cx="6.500" cy="5" r="1.600" fill="#999" /><path d="M4 2.500q-2 2.500 0 5M9 2.500q2 2.500 0 5M2 1q-3 4 0 8M11 1q3 4 0 8" /></svg>
        <T className="ml-[4px] w-[57px]">LIVE: 00:00:00</T>
        <i className="ml-[8px] h-[7px] w-[7px] rounded-full bg-[#d30a0a]" />
        <T className="ml-[7px] w-[56px]">REC: 00:00:00</T>
        <T className="ml-[17px] w-[82px]">CPU: 0.4%, 30.00 fps</T>
      </div>
    </div>
  );
}

function Pointer({ className }: { className: string }) {
  return (
    <svg viewBox="0 0 17 27" className={`absolute h-[27px] w-[17px] ${className}`} fill="#fff" stroke="#111" strokeWidth="1.500">
      <path d="M1 1v20l4.800-4.500 3.200 8 3.500-1.500-3.300-7.500H16z" />
    </svg>
  );
}

function Desktop({ depth }: { depth: number }) {
  return (
    <div className="relative flex h-[720px] w-[1280px] flex-col overflow-hidden bg-[#e6e6e6]">
      <ExcelTitle />
      <ExcelTabs />
      <ProtectedBar />
      <FormulaBar />
      <Sheet />
      <SheetTabs />
      <ExcelStatus />
      <Taskbar />
      <ObsWindow depth={depth} />
      {depth === 1 && <Pointer className="left-[1130px] top-[306px]" />}
      {depth >= 2 && <Pointer className="left-[1129px] top-[341px]" />}
    </div>
  );
}

export default function App() {
  return (
    <div className="h-[720px] w-[1280px] overflow-hidden font-['Open_Sans','Noto_Sans',sans-serif]">
      <Desktop depth={0} />
    </div>
  );
}
